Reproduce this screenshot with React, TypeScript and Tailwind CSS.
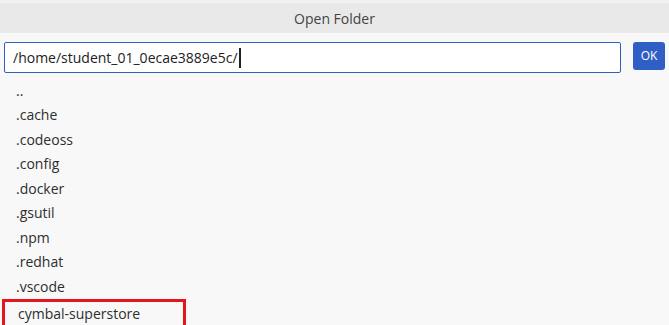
import React from 'react'

const entries = [
    '..',
    '.cache',
    '.codeoss',
    '.config',
    '.docker',
    '.gsutil',
    '.npm',
    '.redhat',
    '.vscode',
    'cymbal-superstore',
]

const App = () => {
    return (
        <div
            className="h-[325px] w-[669px] overflow-hidden bg-[#f8f8f8] text-[#333]"
            style={{ fontFamily: '"Open Sans", "Noto Sans", sans-serif' }}
        >
            {/* Title bar */}
            <div className="flex h-[33px] items-center justify-center border-t-[3px] border-[#f2f2f2] bg-[#e9e9e9] text-[14px] text-[#444]">
                Open Folder
            </div>

            {/* Path input + OK */}
            <div className="flex items-start gap-3 pl-1 pr-1 pt-[9px]">
                <div className="flex h-[31px] flex-1 items-center rounded-[2px] border border-[#2f5fc4] bg-white pl-[8px] text-[14px] text-[#222]">
                    <span>/home/student_01_0ecae3889e5c/</span>
                    <span className="ml-[1px] h-[20px] w-[2px] bg-[#222]" />
                </div>
                <button className="flex h-[28px] w-[32px] items-center justify-center rounded-[3px] bg-[#2f5fc4] text-[12px] text-white">
                    OK
                </button>
            </div>

            {/* Folder list */}
            <ul className="mt-[5px] flex flex-col text-[14px] text-[#2e2e2e]">
                {entries.map((name) => {
                    const selected = name === 'cymbal-superstore'
                    return (
                        <li
                            key={name}
                            className={
                                selected
                                    ? 'ml-[2px] flex h-[30px] w-[184px] items-start border-[3px] border-[#e3151f] pl-[13px] pt-[1px]'
                                    : 'flex h-[24.5px] items-center pl-[16px]'
                            }
                        >
                            {name}
                        </li>
                    )
                })}
            </ul>
        </div>
    )
}

export default App
